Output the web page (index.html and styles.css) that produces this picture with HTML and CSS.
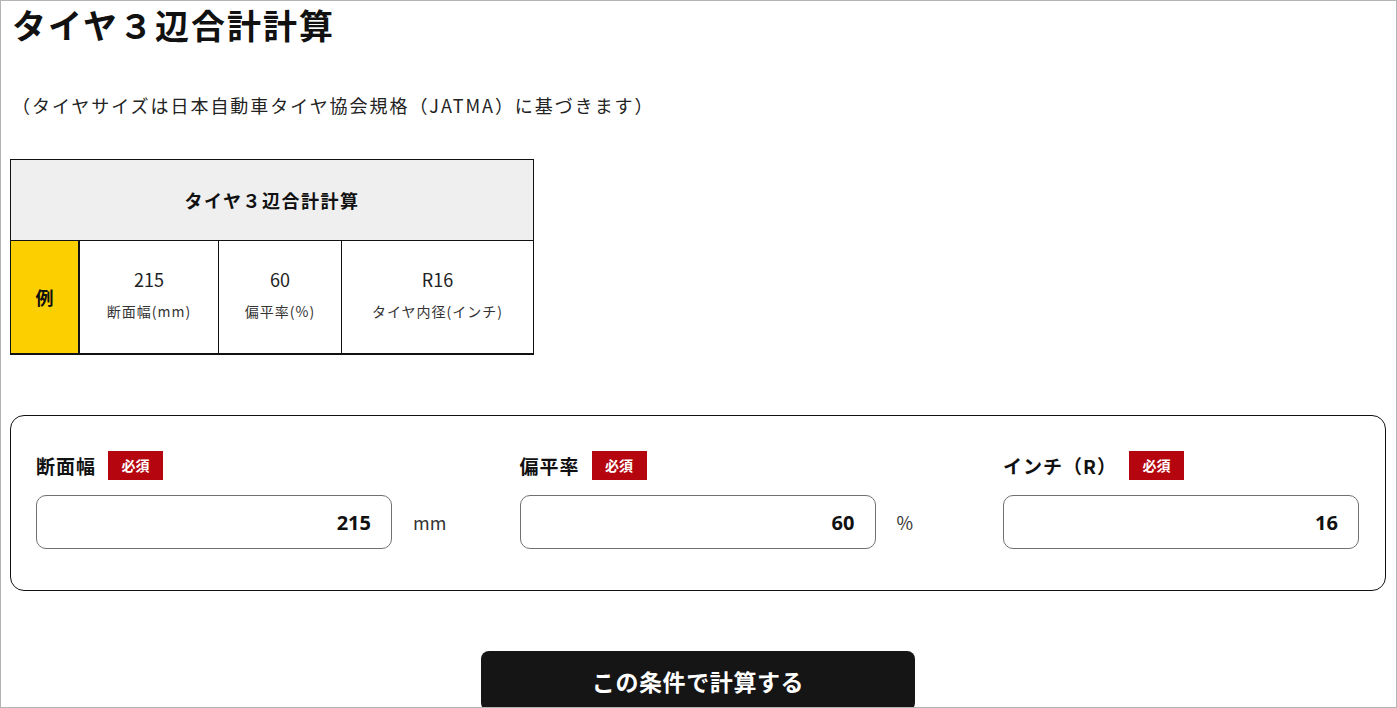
FILE: index.html
```html
<!DOCTYPE html>
<html lang="ja">
<head>
    <meta charset="UTF-8">
    <meta name="viewport" content="width=device-width, initial-scale=1.0">
    <title>タイヤ３辺合計計算</title>
    <link rel="stylesheet" href="styles.css">
</head>
<body>
    <div class="frame"></div>

    <main class="page">
        <h1 class="page-title">タイヤ３辺合計計算</h1>
        <p class="lead">（タイヤサイズは日本自動車タイヤ協会規格（JATMA）に基づきます）</p>

        <table class="example">
            <thead>
                <tr>
                    <th colspan="4">タイヤ３辺合計計算</th>
                </tr>
            </thead>
            <tbody>
                <tr>
                    <td class="example-label">例</td>
                    <td class="col-width">
                        <span class="val">215</span>
                        <span class="cap">断面幅(mm)</span>
                    </td>
                    <td class="col-ratio">
                        <span class="val">60</span>
                        <span class="cap">偏平率(%)</span>
                    </td>
                    <td>
                        <span class="val">R16</span>
                        <span class="cap">タイヤ内径(インチ)</span>
                    </td>
                </tr>
            </tbody>
        </table>

        <form class="calc" onsubmit="return false;">
            <div class="calc-grid">
                <label class="field-label" for="width">断面幅<span class="req">必須</span></label>
                <span></span>
                <label class="field-label" for="ratio">偏平率<span class="req">必須</span></label>
                <span></span>
                <label class="field-label" for="inch">インチ（R）<span class="req">必須</span></label>

                <input class="num" type="text" id="width" value="215">
                <span class="unit">mm</span>
                <input class="num" type="text" id="ratio" value="60">
                <span class="unit">%</span>
                <input class="num" type="text" id="inch" value="16">
            </div>
        </form>

        <div class="actions">
            <button class="submit" type="button">この条件で計算する</button>
        </div>
    </main>
</body>
</html>
```

FILE: styles.css
```css
html, body {
    margin: 0;
    padding: 0;
    background-color: #fff;
}

body {
    font-family: "Noto Sans CJK JP", "Noto Sans", sans-serif;
    color: #111;
}

/* window edge */
.frame {
    position: fixed;
    top: 0;
    left: 0;
    right: 0;
    bottom: 0;
    border: 1px solid #b4b4b4;
    pointer-events: none;
    z-index: 10;
}

.page {
    padding: 0 11px 0 10px;
}

.page-title {
    margin: 0;
    padding: 2px 0 0 2px;
    font-size: 34px;
    font-weight: 700;
    letter-spacing: 2px;
    line-height: 46px;
}

.lead {
    margin: 41px 0 0;
    padding-left: 2px;
    font-size: 18px;
    letter-spacing: 1.95px;
    line-height: 32px;
    color: #222;
}

/* example table */
.example {
    margin-top: 38px;
    border-collapse: collapse;
    width: 524px;
    text-align: center;
}

.example th {
    height: 78px;
    background-color: #efefef;
    border: 1px solid #111;
    font-size: 18px;
    font-weight: 700;
    letter-spacing: 1.5px;
}

.example td {
    height: 105px;
    border: 1px solid #111;
    border-bottom: 2px solid #111;
    padding: 0 0 7px;
}

.example .example-label {
    width: 67px;
    padding: 0 0 1px;
    height: 111px;
    background-color: #fccf00;
    border-right: 2px solid #111;
    font-size: 18px;
    font-weight: 700;
}

.example .col-width {
    width: 138px;
}

.example .col-ratio {
    width: 122px;
}

.val {
    display: block;
    font-size: 18px;
    line-height: 26px;
    color: #222;
}

.cap {
    display: block;
    margin-top: 9px;
    font-size: 14px;
    line-height: 20px;
    letter-spacing: 1px;
    color: #333;
}

/* input form */
.calc {
    margin-top: 60px;
    border: 1px solid #111;
    border-radius: 14px;
    padding: 35px 26px 41px 25px;
}

.calc-grid {
    display: grid;
    grid-template-columns: 356px 1fr 356px 1fr 356px;
    row-gap: 15px;
    align-items: center;
}

.field-label {
    display: flex;
    align-items: center;
    font-size: 19px;
    font-weight: 700;
    letter-spacing: 1px;
    white-space: nowrap;
}

.req {
    display: inline-block;
    margin-left: 12px;
    width: 55px;
    height: 29px;
    line-height: 29px;
    background-color: #b5060f;
    color: #fff;
    font-size: 14px;
    font-weight: 700;
    letter-spacing: 0;
    text-align: center;
}

.num {
    box-sizing: border-box;
    width: 356px;
    height: 54px;
    border: 1px solid #707070;
    border-radius: 10px;
    padding: 0 20px;
    text-align: right;
    font-family: "Noto Sans", "Noto Sans CJK JP", sans-serif;
    font-size: 20px;
    font-weight: 700;
    color: #111;
    background-color: #fff;
}

.unit {
    padding-left: 21px;
    font-size: 18px;
    color: #333;
}

/* submit */
.actions {
    display: flex;
    justify-content: center;
    margin-top: 60px;
}

.submit {
    width: 434px;
    height: 60px;
    border: none;
    border-radius: 8px;
    background-color: #151515;
    color: #fff;
    font-family: "Noto Sans CJK JP", sans-serif;
    font-size: 23px;
    font-weight: 700;
    letter-spacing: 0.6px;
    cursor: pointer;
}
```
